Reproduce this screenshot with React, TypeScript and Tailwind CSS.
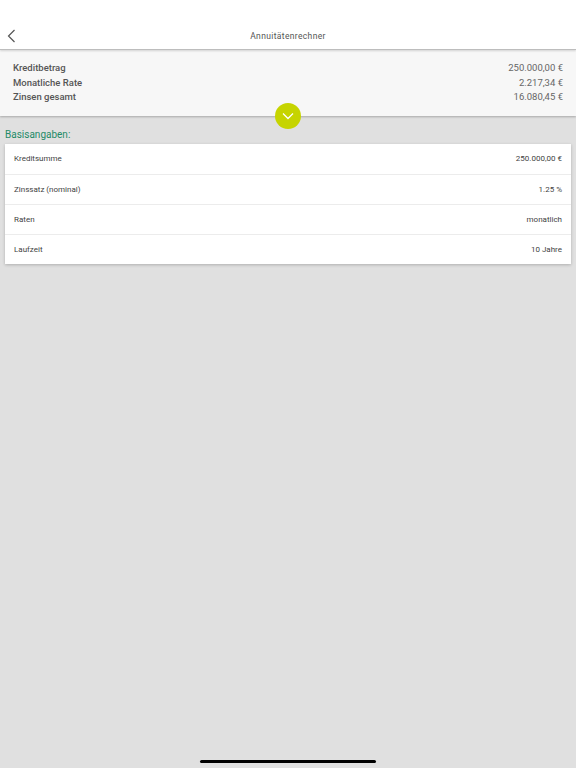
import React from "react";

const summary = [
  ["Kreditbetrag", "250.000,00 €"],
  ["Monatliche Rate", "2.217,34 €"],
  ["Zinsen gesamt", "16.080,45 €"],
];

const rows = [
  ["Kreditsumme", "250.000,00 €"],
  ["Zinssatz (nominal)", "1.25 %"],
  ["Raten", "monatlich"],
  ["Laufzeit", "10 Jahre"],
];

export default function App() {
  return (
    <div
      className="relative flex flex-col w-[576px] h-[768px] bg-[#e0e0e0] overflow-hidden"
      style={{ fontFamily: "Roboto, 'Liberation Sans', sans-serif" }}
    >
      <header className="relative z-20 h-[50px] bg-white border-b border-[#bdbdbd] shadow-[0_1px_2px_rgba(0,0,0,0.15)] grid grid-cols-[40px_1fr_40px] items-end pb-[6px]">
        <div className="pl-[7px] pb-[0px]">
          <svg width="10" height="14" viewBox="0 0 10 14" fill="none" className="block">
            <path d="M7.5 1 L1.5 7 L7.5 13" stroke="#555" strokeWidth="1.2" />
          </svg>
        </div>
        <div className="text-center text-[8.5px] leading-[10px] pb-[2px] tracking-[0.35px] text-[#555]">
          Annuitätenrechner
        </div>
        <div />
      </header>
      <section className="relative z-10 bg-[#f7f7f7] h-[66px] pt-[11px] px-[13px] flex flex-col shadow-[0_1px_2px_rgba(0,0,0,0.25)]">
        {summary.map(([l, v]) => (
          <div key={l} className="flex justify-between h-[14.5px] items-center text-[9.5px] text-[#555]">
            <span className="font-medium">{l}</span>
            <span className="text-[#666]">{v}</span>
          </div>
        ))}
        <div className="absolute left-[275px] top-[53px] w-[26px] h-[26px] rounded-full bg-[#c6d400] flex items-center justify-center">
          <svg width="12" height="8" viewBox="0 0 12 8" fill="none">
            <path d="M1 1.5 L6 6.5 L11 1.5" stroke="#fff" strokeWidth="1.3" />
          </svg>
        </div>
      </section>
      <main className="pt-[13px] px-[5px] flex flex-col">
        <div className="text-[10px] text-[#238a67] h-[15px] leading-[12px]">Basisangaben:</div>
        <div className="bg-white shadow-[0_1px_3px_rgba(0,0,0,0.22)] flex flex-col">
          {rows.map(([l, v], i) => (
            <div
              key={l}
              className={`flex justify-between items-center h-[30px] px-[9px] text-[8px] text-[#3f3f3f] ${i > 0 ? "border-t border-[#ececec]" : ""}`}
            >
              <span>{l}</span>
              <span>{v}</span>
            </div>
          ))}
        </div>
      </main>
      <div className="mt-auto mb-[5px] flex justify-center">
        <div className="w-[176px] h-[3px] rounded-full bg-black" />
      </div>
    </div>
  );
}
